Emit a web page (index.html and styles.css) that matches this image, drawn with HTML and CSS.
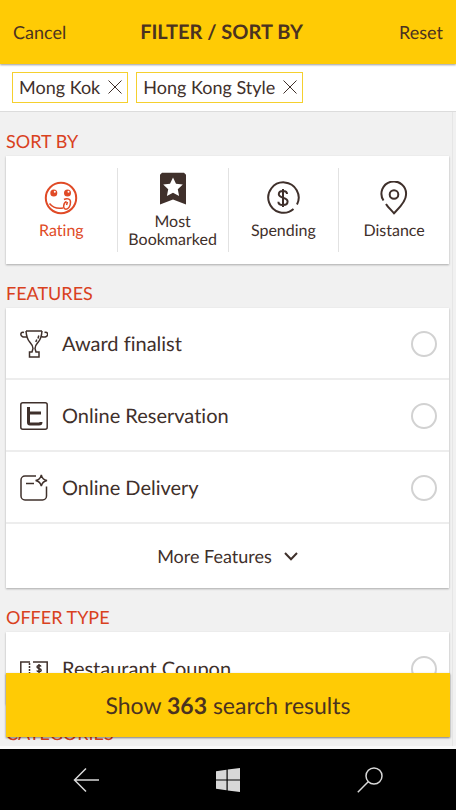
FILE: index.html
```html
<!DOCTYPE html>
<html lang="en">
<head>
<meta charset="utf-8">
<meta name="viewport" content="width=device-width, initial-scale=1">
<title>Filter / Sort by</title>
<link rel="stylesheet" href="styles.css">
</head>
<body>
<header class="topbar">
  <button class="topbar-action" type="button">Cancel</button>
  <h1 class="topbar-title">FILTER / SORT BY</h1>
  <button class="topbar-action topbar-end" type="button">Reset</button>
</header>

<div class="chips">
  <button class="chip" type="button">Mong Kok
    <svg class="chip-x" viewBox="0 0 14 14" aria-hidden="true"><path d="M.5 .5L13.500 13.500M13.500 .5L.5 13.500"/></svg>
  </button>
  <button class="chip" type="button">Hong Kong Style
    <svg class="chip-x" viewBox="0 0 14 14" aria-hidden="true"><path d="M.5 .5L13.500 13.500M13.500 .5L.5 13.500"/></svg>
  </button>
</div>

<div class="content">
  <main class="scroller">
    <section>
      <h2 class="section-title">SORT BY</h2>
      <div class="card sort">
        <button class="sort-option selected" type="button">
          <svg class="sort-icon" viewBox="0 0 34 34" aria-hidden="true">
            <circle cx="17" cy="17" r="15.200"/>
            <circle cx="9.800" cy="12" r="3.500" class="solid"/><circle cx="23.500" cy="12" r="3.500" class="solid"/>
            <circle cx="10.800" cy="10.800" r="1" class="hole"/><circle cx="24.500" cy="10.800" r="1" class="hole"/>
            <path class="fine" d="M5.500 22.500c3 3.800 8 5.500 13.500 4.500M20 18.500c2.500-1.500 6.500-1 6.500 2.500 0 4-2 7.200-4.500 7.200-3.800 0-2.500-6.700.5-7.700M23.500 21l-1 3"/>
          </svg>
          <span>Rating</span>
        </button>
        <button class="sort-option" type="button">
          <svg class="sort-icon" viewBox="0 0 34 34" aria-hidden="true">
            <path class="solid" d="M6 .8h22l2 2V32.500L17 27.500 4 32.500V2.800z"/>
            <path class="hole" d="M17 5.500l3 6.200 6.800.9-5 4.700 1.300 6.700-6.100-3.300-6.100 3.300 1.300-6.700-5-4.700 6.800-.9z"/>
          </svg>
          <span>Most Bookmarked</span>
        </button>
        <button class="sort-option" type="button">
          <svg class="sort-icon" viewBox="0 0 34 34" aria-hidden="true">
            <path d="M27.500 28a15.200 15.200 0 1 1 3.500-4.500"/>
            <path d="M21 13c0-2-1.700-3-4-3s-4.200 1-4.200 3.300c0 4.400 8.800 2.500 8.800 7.200 0 2.300-2 3.500-4.600 3.500s-4.600-1.200-4.600-3.300M17 8v18"/>
          </svg>
          <span>Spending</span>
        </button>
        <button class="sort-option" type="button">
          <svg class="sort-icon" viewBox="0 0 34 34" aria-hidden="true">
            <path d="M6.500 19.500a12.300 12.300 0 1 1 22.500-5.500c0 7-7.500 13.500-12 18.200-3-3.200-6-6-8-9.200"/>
            <circle cx="17" cy="13.500" r="4.300"/>
          </svg>
          <span>Distance</span>
        </button>
      </div>
    </section>

    <section>
      <h2 class="section-title">FEATURES</h2>
      <div class="card">
        <label class="row">
          <svg class="row-icon" viewBox="0 0 28 28" aria-hidden="true">
            <path d="M6 1h16M6 1c.4 5 1 8 3.700 11 2 2.200 3.300 3.500 3.300 6.500l-1 3.500H9.500v5h9.500v-5h-3l-1-3.500c0-3 1.300-4.300 3.300-6.500C21 9 21.600 6 22 1M7 6.500C3.500 8 .8 6.300.8 4.300.8 2.500 2.500 1.800 4 2.500M21.500 6.500c3.500 1.500 6.200-.2 6.200-2.200 0-1.800-1.700-2.500-3.200-1.800M18.800 5.500l-.8 3M16.800 9.500l-1 2.500"/>
          </svg>
          <span class="row-label">Award finalist</span>
          <input class="tick" type="checkbox">
        </label>
        <label class="row">
          <svg class="row-icon" viewBox="0 0 28 28" aria-hidden="true">
            <rect x=".8" y=".8" width="26.400" height="26.400" rx="2"/>
            <path class="thick" d="M8.500 5v15.500a1.500 1.500 0 0 0 1.500 1.500H19a2 2 0 0 0 2-2M8.500 11H21"/>
          </svg>
          <span class="row-label">Online Reservation</span>
          <input class="tick" type="checkbox">
        </label>
        <label class="row">
          <svg class="row-icon" viewBox="0 0 28 28" aria-hidden="true">
            <path d="M16 2H5a4 4 0 0 0-4 4v16a4 4 0 0 0 4 4h17.500a4 4 0 0 0 4-4V12.500M6 9.500h8"/>
            <path d="M21.300.8c.7 3.500 2.200 5 5.700 5.700-3.500.7-5 2.200-5.700 5.700-.7-3.500-2.200-5-5.700-5.700 3.500-.7 5-2.200 5.700-5.700z"/>
          </svg>
          <span class="row-label">Online Delivery</span>
          <input class="tick" type="checkbox">
        </label>
        <button class="more" type="button">More Features
          <svg class="more-icon" viewBox="0 0 14 10" aria-hidden="true"><path d="M1 2L7 8.300 13 2"/></svg>
        </button>
      </div>
    </section>

    <section>
      <h2 class="section-title">OFFER TYPE</h2>
      <div class="card">
        <label class="row">
          <svg class="row-icon" viewBox="0 0 28 28" aria-hidden="true">
            <path d="M10 7H.8v16H10M13 7h14.200v16H13"/>
            <path stroke-dasharray="2 1" d="M9.500 8v15"/>
            <path d="M21 11.500c-.8-1.500-4-1.300-4 .5 0 2 4.200 1 4.200 3.200 0 1.800-3.500 2-4.400.3M19 9v9"/>
          </svg>
          <span class="row-label">Restaurant Coupon</span>
          <input class="tick" type="checkbox">
        </label>
      </div>
    </section>

    <section>
      <h2 class="section-title">CATEGORIES</h2>
    </section>
  </main>
  <button class="show" type="button">Show <b>363</b> search results</button>
</div>

<nav class="navbar">
  <button class="nav-button" type="button" aria-label="Back">
    <svg class="nav-icon" viewBox="0 0 26 26" aria-hidden="true"><path d="M26 13H1.500M13 1.500L1.500 13 13 24.500"/></svg>
  </button>
  <button class="nav-button" type="button" aria-label="Start">
    <svg class="nav-icon" viewBox="0 0 26 26" aria-hidden="true"><path class="flag" d="M1 4.200L11.500 2.800V12.400H1zM12.700 2.600L25 1V12.400H12.700zM1 13.600H11.500V23.200L1 21.800zM12.700 13.600H25V25L12.700 23.400z"/></svg>
  </button>
  <button class="nav-button" type="button" aria-label="Search">
    <svg class="nav-icon" viewBox="0 0 26 26" aria-hidden="true"><circle cx="17" cy="9" r="8"/><path d="M11.200 14.800L.8 25.200"/></svg>
  </button>
</nav>
</body>
</html>
```
FILE: styles.css
```css
* {
  box-sizing: border-box;
}

body {
  margin: 0;
  height: 100vh;
  display: flex;
  flex-direction: column;
  background: #f1f1f1;
  color: #3f302b;
  font-family: Lato, "Liberation Sans", sans-serif;
  font-variant-ligatures: none;
  text-rendering: geometricPrecision;
}

button {
  margin: 0;
  padding: 0;
  border: 0;
  background: none;
  color: inherit;
  font: inherit;
  font-variant-ligatures: none;
  text-rendering: inherit;
  cursor: pointer;
}

svg {
  fill: none;
  stroke: currentColor;
  flex: none;
}

.topbar {
  position: relative;
  z-index: 1;
  display: grid;
  grid-template-columns: 1fr auto 1fr;
  align-items: center;
  height: 64px;
  padding: 0 13px;
  background: #ffcb05;
  box-shadow: 0 1px 2px rgba(0, 0, 0, 0.4);
  color: #4b3220;
}

.topbar-action {
  justify-self: start;
  font-size: 18px;
}

.topbar-end {
  justify-self: end;
}

.topbar-title {
  margin: 0 13px 0 0;
  font-size: 20px;
  font-weight: 700;
}

.chips {
  display: flex;
  align-items: center;
  gap: 8px;
  height: 48px;
  padding: 0 12px;
  background: #fff;
  border-bottom: 1px solid #dcdcdc;
}

.chip {
  display: flex;
  align-items: center;
  gap: 8px;
  height: 31px;
  padding: 0 5px 2px 6px;
  border: 1px solid #f5d02e;
  font-size: 18px;
}

.chip-x {
  width: 14px;
  height: 14px;
}

.content {
  position: relative;
  flex: 1;
  min-height: 0;
  padding: 0 3px 0 0;
  border-bottom: 3px solid #fafafa;
}

.scroller {
  height: 100%;
  padding: 0 3px 0 6px;
  overflow-y: auto;
  scrollbar-width: none;
  border-right: 1px solid #e6e6e6;
}

.section-title {
  margin: 0;
  padding: 18px 0 4px;
  color: #d9411e;
  font-size: 18px;
  font-weight: 400;
  line-height: 22px;
}

.card {
  background: #fff;
  box-shadow: 0 1px 2px rgba(0, 0, 0, 0.3);
}

.sort {
  display: grid;
  grid-template-columns: repeat(4, 1fr);
  height: 108px;
  padding: 12px 0;
}

.sort-option {
  display: flex;
  flex-direction: column;
  align-items: center;
  justify-content: center;
  gap: 7px;
  font-size: 16px;
  line-height: 18px;
}

.sort-option + .sort-option {
  border-left: 1px solid #e2e2e2;
}

.sort-icon {
  width: 34px;
  height: 34px;
  stroke-width: 2;
}

.fine {
  stroke-width: 1.5;
}

.selected {
  color: #e04a26;
}

.solid {
  fill: currentColor;
  stroke: none;
}

.hole {
  fill: #fff;
  stroke: none;
}

.row {
  display: flex;
  align-items: center;
  gap: 14px;
  height: 72px;
  padding: 2px 12px 0 14px;
  font-size: 20px;
}

.row:not(:last-child) {
  border-bottom: 2px solid #ededed;
}

.row-icon {
  width: 28px;
  height: 28px;
  stroke-width: 1.5;
}

.thick {
  stroke-width: 3;
}

.row-label {
  flex: 1;
}

.tick {
  appearance: none;
  width: 26px;
  height: 26px;
  margin: 0;
  border: 2px solid #d2d2d2;
  border-radius: 50%;
}

.tick:checked {
  background: #ffcb05;
}

.more {
  display: flex;
  align-items: center;
  justify-content: center;
  gap: 12px;
  width: 100%;
  height: 64px;
  font-size: 18px;
}

.more-icon {
  width: 14px;
  height: 10px;
  stroke-width: 2;
}

.show {
  position: absolute;
  right: 6px;
  bottom: 9px;
  left: 6px;
  height: 64px;
  background: #ffcb05;
  box-shadow: 0 1px 2px rgba(0, 0, 0, 0.5);
  color: #4b3220;
  font-size: 23px;
}

.navbar {
  display: flex;
  justify-content: space-between;
  height: 61px;
  padding: 0 60px;
  background: #000;
  color: #d8d8d8;
}

.nav-button {
  display: flex;
  align-items: center;
  justify-content: center;
  width: 52px;
}

.nav-icon {
  width: 26px;
  height: 26px;
  stroke-width: 1.5;
}

.flag {
  fill: currentColor;
  stroke: none;
}
```
